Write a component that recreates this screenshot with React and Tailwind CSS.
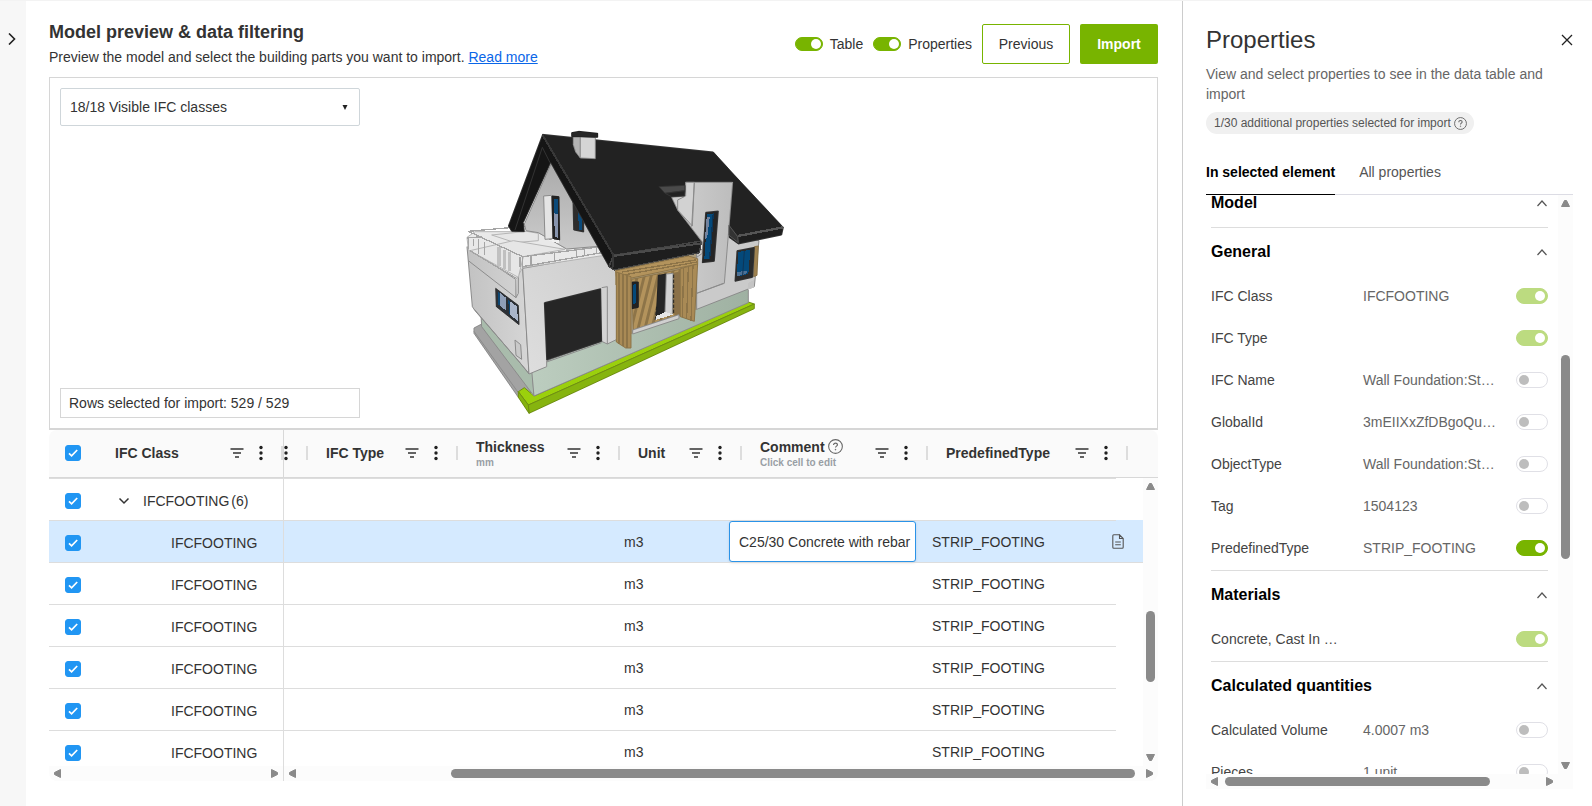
import clsx from "clsx";

const columns = [
  { label: "IFC Type", width: "w-[150px]" },
  { label: "Thickness", hint: "mm", width: "w-[162px]" },
  { label: "Unit", width: "w-[122px]" },
  { label: "Comment", hint: "Click cell to edit", help: true, width: "w-[186px]" },
  { label: "PredefinedType", width: "w-[200px]" },
];

const rows = [
  { id: 1, selected: true, comment: "C25/30 Concrete with rebar" },
  { id: 2, afterSelected: true },
  { id: 3 },
  { id: 4 },
  { id: 5 },
  { id: 6 },
];

const sections = [
  { title: "Model", items: [] },
  {
    title: "General",
    items: [
      { name: "IFC Class", value: "IFCFOOTING", on: true, locked: true },
      { name: "IFC Type", value: "", on: true, locked: true },
      { name: "IFC Name", value: "Wall Foundation:St…" },
      { name: "GlobalId", value: "3mEIIXxZfDBgoQu…" },
      { name: "ObjectType", value: "Wall Foundation:St…" },
      { name: "Tag", value: "1504123" },
      { name: "PredefinedType", value: "STRIP_FOOTING", on: true },
    ],
  },
  {
    title: "Materials",
    items: [{ name: "Concrete, Cast In …", value: "", on: true, locked: true }],
  },
  {
    title: "Calculated quantities",
    items: [
      { name: "Calculated Volume", value: "4.0007 m3" },
      { name: "Pieces", value: "1 unit" },
    ],
  },
];

function FilterIcon() {
  return (
    <svg className="h-3 w-[14px] shrink-0" viewBox="0 0 14 12" fill="none" stroke="#333" strokeWidth="1.6">
      <path d="M.5 2h13M3 6h8M5 10h4" />
    </svg>
  );
}

function DotsIcon() {
  return (
    <svg className="h-4 w-1 shrink-0" viewBox="0 0 4 16" fill="#222">
      <circle cx="2" cy="2.5" r="1.7" />
      <circle cx="2" cy="8" r="1.7" />
      <circle cx="2" cy="13.5" r="1.7" />
    </svg>
  );
}

function HelpIcon({ className }) {
  return (
    <svg className={clsx("shrink-0", className)} viewBox="0 0 14 14" fill="none" stroke="#666">
      <circle cx="7" cy="7" r="6.4" strokeWidth="1" />
      <path d="M5.2 5.6c0-1.1.8-1.8 1.8-1.8s1.8.7 1.8 1.6c0 1.2-1.8 1.3-1.8 2.6" strokeWidth="1.1" />
      <circle cx="7" cy="9.9" r=".5" fill="#666" strokeWidth=".4" />
    </svg>
  );
}

function DocumentIcon() {
  return (
    <svg className="h-[15px] w-3" viewBox="0 0 12 15" fill="none" stroke="#555" strokeWidth="1.1">
      <path d="M7.5.8H1.8Q.8.8.8 1.8v11.4q0 1 1 1h8.4q1 0 1-1V4.5L7.5.8v3.7h3.7M3.2 8h5.6M3.2 10.8h5.6" />
    </svg>
  );
}

function Chevron({ className, d }) {
  return (
    <svg className={clsx("shrink-0", className)} viewBox="0 0 12 12" fill="none" stroke="currentColor">
      <path d={d} />
    </svg>
  );
}

function Triangle({ points }) {
  return (
    <svg
      className="size-[9px] shrink-0"
      viewBox="0 0 9 9"
      fill="#8a8a8a"
      stroke="#8a8a8a"
      strokeLinejoin="round"
    >
      <polygon points={points} />
    </svg>
  );
}

function VerticalScrollbar({ before, thumb, after }) {
  return (
    <div className="flex w-[15px] shrink-0 flex-col items-center bg-[#fcfcfc] py-1">
      <Triangle points=".5,7.5 8.5,7.5 5.5,1.5 3.5,1.5" />
      <div style={{ flexGrow: before }} />
      <div className="w-[9px] rounded-full bg-[#8a8a8a]" style={{ flexGrow: thumb }} />
      <div style={{ flexGrow: after }} />
      <Triangle points=".5,1.5 8.5,1.5 5.5,7.5 3.5,7.5" />
    </div>
  );
}

function HorizontalScrollbar({ before, thumb, after, className }) {
  return (
    <div className={clsx("flex h-[15px] items-center bg-[#fcfcfc] pl-1", className)}>
      <Triangle points="7.5,.5 7.5,8.5 1.5,5.5 1.5,3.5" />
      <div style={{ flexGrow: before }} />
      <div className="h-[9px] rounded-full bg-[#8a8a8a]" style={{ flexGrow: thumb }} />
      <div style={{ flexGrow: after }} />
      <Triangle points="1.5,.5 1.5,8.5 7.5,5.5 7.5,3.5" />
    </div>
  );
}

function Switch({ small, locked, ...props }) {
  return (
    <input
      type="checkbox"
      role="switch"
      className={clsx(
        "relative shrink-0 appearance-none rounded-full border border-[#e0e0e6] bg-white",
        "before:absolute before:top-1/2 before:size-2.5 before:-translate-y-1/2 before:rounded-full before:bg-[#bdbdbd] checked:before:bg-white",
        small
          ? "h-3.5 w-7 before:left-px checked:before:left-[15px]"
          : "h-4 w-8 before:left-0.5 checked:before:left-[18px]",
        locked
          ? "checked:border-[#bcdb80] checked:bg-[#bcdb80]"
          : "checked:border-[#78b400] checked:bg-[#78b400]"
      )}
      {...props}
    />
  );
}

function Checkbox({ label }) {
  return (
    <span className="grid size-4">
      <input
        type="checkbox"
        defaultChecked
        aria-label={label}
        className="col-start-1 row-start-1 size-4 appearance-none rounded-[3px] border border-[#2196f3] bg-[#2196f3]"
      />
      <svg
        className="pointer-events-none col-start-1 row-start-1 size-4"
        viewBox="0 0 16 16"
        fill="none"
        stroke="#fff"
        strokeWidth="1.7"
      >
        <path d="M4 8.3l2.6 2.5L12.2 5" />
      </svg>
    </span>
  );
}

function HouseModel() {
  return (
    <svg
      className="absolute inset-0 size-full"
      viewBox="0 0 1107 350"
      role="img"
      aria-label="3D model of a house"
      shapeRendering="crispEdges"
    >
      <defs>
        <linearGradient id="front" x1="0" x2="1" y1="1" y2="0">
          <stop offset="0" stopColor="#dedede" />
          <stop offset="1" stopColor="#cdcdcd" />
        </linearGradient>
        <linearGradient id="side" x1="0" x2="1">
          <stop offset="0" stopColor="#c2c2c2" />
          <stop offset="1" stopColor="#d6d6d6" />
        </linearGradient>
        <linearGradient id="plinth" x1="0" x2="1">
          <stop offset="0" stopColor="#bccdbf" />
          <stop offset="1" stopColor="#9fb1a2" />
        </linearGradient>
        <linearGradient id="gable" x1="0" x2="0" y1="0" y2="1">
          <stop offset="0" stopColor="#aaa" />
          <stop offset="1" stopColor="#cbcbcb" />
        </linearGradient>
        <linearGradient id="tower" x1="0" x2="1">
          <stop offset="0" stopColor="#cfcfcf" />
          <stop offset="1" stopColor="#bdbdbd" />
        </linearGradient>
        <pattern id="slats" width="20" height="40" patternUnits="userSpaceOnUse" patternTransform="rotate(14)">
          <rect width="20" height="40" fill="#b3935c" />
          <rect width="8" height="40" fill="#8d7448" />
        </pattern>
      </defs>
      <g transform="translate(405 42) scale(.33333)" stroke="#8c8c8c" strokeWidth="3" strokeLinejoin="round">
        {/* footing and plinth */}
        <polygon points="57,624 80,612 232,815 190,832 57,640" fill="#a3a3a3" />
        <path d="M57,634 L190,818" fill="none" />
        <g stroke="#6f8f14">
          <polygon points="190,815 208,803 237,828 880,546 898,552 220,855" fill="#9bd00c" />
          <polygon points="220,855 898,552 898,566 222,880" fill="#86b40f" />
          <polygon points="190,815 220,855 222,880 190,832" fill="#86b40f" />
        </g>
        <polygon points="78,585 232,755 237,828 80,620" fill="#a9bcac" />
        <polygon points="230,750 237,828 880,548 880,500 490,600" fill="url(#plinth)" />

        {/* garage block */}
        <polygon points="36,380 182,478 203,440 222,762 190,722 60,572 52,560" fill="url(#side)" />
        <path d="M40,422 L183,533 L182,480 M58,568 L220,758" fill="none" />
        <polygon points="203,445 460,400 492,440 492,655 457,672 440,664 275,722 275,740 222,762" fill="url(#front)" />
        <path d="M440,503 L457,500 L457,672 M183,533 L190,520 L190,450" fill="none" />
        <polygon points="268,548 437,506 440,664 275,720" fill="#262626" stroke="#333" />
        <path d="M275,726 L440,668" fill="none" />
        <polygon points="180,660 197,674 200,718 183,706" fill="#c9c9c9" />
        <polygon points="122,505 190,556 192,614 124,560" fill="#2b3036" stroke="#333" />
        <polygon points="128,514 153,533 154,572 129,553" fill="#8f9fb8" stroke="none" />
        <polygon points="160,540 187,560 188,604 162,580" fill="#a9b5c9" stroke="none" />
        <polygon points="128,514 134,519 135,557 129,553" fill="#0d4672" stroke="none" />
        <polygon points="160,540 166,544 166,584 162,580" fill="#0d4672" stroke="none" />

        {/* terrace */}
        <polygon points="36,352 60,335 245,335 335,387 440,378 455,405 203,443 185,475 40,390" fill="#e9e9e9" stroke="#b5b5b5" />
        <polygon points="110,345 215,334 250,340 250,362 180,368" fill="#e6e6e6" stroke="#b5b5b5" />
        <polygon points="45,392 175,362 330,388 205,410 190,472" fill="#e6e6e6" stroke="#b5b5b5" />
        <g fill="none" stroke="#a5a5a5" strokeWidth="4">
          <path d="M40,334 L220,318 M40,334 L203,410 L440,380 M36,354 L80,350" />
          <path d="M203,440 L440,398 M203,410 V443 M228,407 V438 M298,398 V426 M365,389 V410 M388,387 V408 M425,382 V400" />
          <path d="M40,352 V388 M55,356 V378 M70,358 V402 M88,366 V404 M195,410 V440" />
          <path d="M45,392 L182,474 M182,478 V530" />
        </g>
        <path d="M132,382 V438 M148,390 V446 M164,396 V454" fill="none" stroke="#c0c0c0" strokeWidth="10" />

        {/* gable */}
        <polygon points="290,128 208,312 213,332 250,338 335,387 442,378" fill="url(#gable)" />
        <polygon points="266,228 290,226 294,356 270,358" fill="#e4e4e4" />
        <polygon points="291,228 312,230 314,360 294,356" fill="#222" stroke="#222" />
        <polygon points="298,236 308,236 309,300 298,300" fill="#0b4a7a" stroke="none" />
        <polygon points="298,280 309,284 310,354 299,350" fill="#8794ad" stroke="none" />
        <polygon points="294,358 314,362 312,370 280,362" fill="#efefef" stroke="none" />
        <polygon points="354,238 386,290 386,336 356,330" fill="#2c2c2c" stroke="#333" />
        <polygon points="370,270 382,290 382,332 371,328" fill="#0b4a7a" stroke="none" />

        {/* right wing and the wall behind the porch */}
        <polygon points="478,440 735,380 728,568 492,655" fill="#a99a7c" stroke="none" />
        <polygon points="725,400 800,340 912,362 898,500 725,568" fill="#cacaca" />
        <polygon points="880,510 898,500 898,480 880,488" fill="#c4c4c4" stroke="none" />
        <polygon points="898,380 910,378 906,466 896,470" fill="#9f8250" stroke="#8d7448" />
        <polygon points="846,392 898,382 893,472 840,484" fill="#2b2b2b" stroke="#333" />
        <polygon points="850,396 886,389 880,462 845,470" fill="#04497a" stroke="none" />
        <polygon points="846,456 876,452 874,462 845,469" fill="#4e7195" stroke="none" />
        <path d="M868,393 L863,466" stroke="#0d3557" fill="none" />

        {/* roof */}
        <polygon points="263,43 160,318 170,334 208,335 205,308 287,128 462,440 474,448 475,406" fill="#151515" stroke="#333" />
        <path d="M262,82 L180,330 M262,82 L285,128" fill="none" stroke="#333" />
        <polygon points="263,43 775,96 838,165 985,322 848,350 690,230 668,232 668,270 740,366 475,406" fill="#222" stroke="#333" />
        <polygon points="475,406 740,363 733,398 478,450 462,440" fill="#1e1e1e" stroke="#444" strokeWidth="4" />
        <path d="M475,408 L738,370" fill="none" stroke="#4b4b4b" strokeWidth="6" />
        <path d="M263,46 L475,405 L472,448" fill="none" stroke="#383838" strokeWidth="6" />
        <polygon points="822,316 848,350 985,322 980,345 850,372 822,352" fill="#1e1e1e" stroke="#333" />
        <path d="M848,348 L985,322" fill="none" stroke="#555" strokeWidth="7" />

        {/* stair tower */}
        <polygon points="650,232 692,228 692,187 833,187 808,490 725,520 725,412 742,400 742,366 668,270" fill="url(#tower)" />
        <polygon points="692,187 718,187 712,318 668,270 668,240 692,228" fill="#d2d2d2" />
        <path d="M718,187 L710,320 M725,520 L805,490" fill="none" />
        <polygon points="612,200 690,196 690,212 630,220" fill="#4a4a4a" stroke="#333" />
        <polygon points="630,220 690,212 688,228 650,230" fill="#222" stroke="#333" />
        <polygon points="752,277 790,273 778,424 742,428" fill="#252525" stroke="#333" />
        <polygon points="757,283 776,280 764,416 748,418" fill="#04497a" stroke="none" />
        <polygon points="755,290 764,292 757,350 750,358" fill="#71839f" stroke="none" />
        <path d="M775,280 L764,416" fill="none" stroke="#0d3557" strokeWidth="4" />
        <polygon points="822,316 848,350 850,368 822,346" fill="#333" stroke="#555" />

        {/* chimney */}
        <polygon points="355,50 376,50 376,114 362,96 355,74" fill="#b3b3b3" />
        <polygon points="376,50 421,52 421,116 376,114" fill="#d5d5d5" />
        <polygon points="350,38 372,34 428,40 428,52 376,50 350,50" fill="#262626" stroke="#222" />

        {/* entrance */}
        <g stroke="#8d7448">
          <polygon points="482,452 700,408 728,416 728,432 530,474 484,470" fill="#b3935c" />
          <path d="M500,456 L722,420 M510,464 L726,426" fill="none" strokeWidth="4" />
          <polygon points="530,478 685,446 690,580 535,630" fill="url(#slats)" />
          <polygon points="655,460 712,448 708,600 655,580" fill="#8a7048" />
          <polygon points="484,456 528,470 528,684 512,684 484,666" fill="#a98a55" />
          <path d="M492,460 V672 M504,462 V678 M516,466 V684" fill="none" strokeWidth="4" />
          <polygon points="676,446 728,432 718,604 676,590" fill="#a98a55" />
          <path d="M686,444 L682,592 M700,442 L695,596 M714,434 L708,604" fill="none" strokeWidth="4" />
        </g>
        <polygon points="532,486 550,486 550,562 532,566" fill="#222" stroke="#222" />
        <polygon points="535,494 543,492 543,550 535,552" fill="#04497a" stroke="none" />
        <polygon points="610,466 634,462 632,580 604,590" fill="#262626" stroke="#222" />
        <polygon points="634,462 654,460 652,584 630,580" fill="#d3d3d3" />
        <polygon points="600,600 604,588 632,576 655,584" fill="#e6e6e6" stroke="none" />
        <path d="M656,464 V584 M605,560 L600,604" fill="none" stroke="#222" strokeDasharray="10 5" />
        <polygon points="533,630 672,584 672,596 533,642" fill="#d0d0d0" />
      </g>
    </svg>
  );
}

function HeaderCell({ label, hint, help, className }) {
  return (
    <th scope="col" className={clsx("p-0 text-left", className)}>
      <div className="flex items-center pl-[18px]">
        <div className={clsx(hint && "pt-1")}>
          <div className="flex h-4 items-center gap-[3px] leading-4">
            {label}
            {help && <HelpIcon className="size-[15px]" />}
          </div>
          {hint && <div className="text-[10px] leading-4 text-[#999fa5]">{hint}</div>}
        </div>
        <button type="button" aria-label={`Filter ${label}`} className="ml-auto">
          <FilterIcon />
        </button>
        <button type="button" aria-label={`${label} menu`} className="mr-[18px] ml-[15px]">
          <DotsIcon />
        </button>
        <span className="h-3.5 w-0.5 bg-[#ddd]" />
      </div>
    </th>
  );
}

function DataTable() {
  const cell = "border-t border-[#ddd] p-0";

  return (
    <section className="flex min-h-0 flex-1 flex-col overflow-hidden rounded-lg text-sm text-[#333]">
      <table className="w-full table-fixed border-separate border-spacing-0 bg-[#fafafa]">
        <thead>
          <tr className="h-12 *:h-12 *:border-b *:border-[#d8d8d8] *:pb-0.5">
            <th className="w-12 p-0 pl-4">
              <Checkbox label="Select all rows" />
            </th>
            <HeaderCell label="IFC Class" className="w-[187px] border-r" />
            <th className="w-6 p-0">
              <div className="flex items-center justify-between">
                <DotsIcon />
                <span className="h-3.5 w-0.5 bg-[#ddd]" />
              </div>
            </th>
            {columns.map(({ width, ...column }) => (
              <HeaderCell key={column.label} {...column} className={width} />
            ))}
            <th className="p-0" />
          </tr>
        </thead>
      </table>

      <div className="flex min-h-0 flex-1">
        <div className="min-w-0 flex-1 overflow-hidden">
          <table className="w-full table-fixed border-separate border-spacing-0">
            <colgroup>
              <col className="w-12" />
              <col className="w-[187px]" />
              <col className="w-[162px]" />
              <col className="w-[163px]" />
              <col className="w-[120px]" />
              <col className="w-[187px]" />
              <col className="w-[200px]" />
              <col />
            </colgroup>
            <tbody>
              <tr className="h-[42px]">
                <td className={clsx(cell, "pt-0.5 pl-4")}>
                  <Checkbox label="Select IFCFOOTING group" />
                </td>
                <td className={clsx(cell, "border-r pt-0.5")}>
                  <button type="button" className="flex items-center pl-[21px]">
                    <Chevron className="mr-[13px] size-3 stroke-[1.5]" d="M1.5 3.5L6 8l4.5-4.5" />
                    IFCFOOTING
                    <span className="ml-0.5">(6)</span>
                  </button>
                </td>
                <td colSpan={5} className={cell} />
                <td className="p-0" />
              </tr>
              {rows.map((row) => (
                <tr key={row.id} className={clsx("h-[42px]", row.selected && "bg-[#d5eaff]")}>
                  <td className={clsx(cell, "pt-0.5 pl-4")}>
                    <Checkbox label={`Select row ${row.id}`} />
                  </td>
                  <td className={clsx(cell, "border-r pt-0.5 pl-[74px]")}>IFCFOOTING</td>
                  <td className={cell} />
                  <td className={cell} />
                  <td className={clsx(cell, "pl-[15px]")}>m3</td>
                  <td className={cell}>
                    {row.comment && (
                      <input
                        type="text"
                        aria-label="Comment"
                        defaultValue={row.comment}
                        className="block h-[41px] w-full rounded-[3px] border border-[#2a93e8] bg-white pl-[9px] shadow outline-none"
                      />
                    )}
                  </td>
                  <td className={clsx(cell, "pl-4")}>STRIP_FOOTING</td>
                  <td
                    className={clsx(
                      "p-0",
                      (row.selected || row.afterSelected) && "border-t",
                      row.selected && "border-transparent bg-clip-padding",
                      row.afterSelected && "border-[#ddd]"
                    )}
                  >
                    {row.selected && (
                      <button type="button" aria-label="Row details" className="-ml-1 block">
                        <DocumentIcon />
                      </button>
                    )}
                  </td>
                </tr>
              ))}
            </tbody>
          </table>
        </div>
        <VerticalScrollbar before={120} thumb={72} after={71} />
      </div>

      <div className="flex">
        <HorizontalScrollbar className="w-[235px] border-r border-[#ddd] pr-1" before={1} thumb={0} after={0} />
        <HorizontalScrollbar className="flex-1 pr-1" before={154} thumb={684} after={10} />
      </div>
    </section>
  );
}

function PropertySection({ title, items }) {
  return (
    <section className="border-b border-[#ddd]">
      <button type="button" className="flex h-12 w-full items-center justify-between">
        <h3 className="text-base font-bold text-black">{title}</h3>
        <Chevron className="size-3 stroke-[1.2] text-[#555]" d="M1.5 9L6 4l4.5 5" />
      </button>
      {items.map((item) => {
        const id = item.name.toLowerCase().replace(/\W+/g, "-");
        return (
          <div key={id} className="flex h-[42px] items-center pb-0.5 text-sm">
            <label htmlFor={id} className="w-[132px] whitespace-nowrap text-[#444]">
              {item.name}
            </label>
            <span className="ml-5 flex-1 whitespace-nowrap text-[#666]">{item.value}</span>
            <Switch id={id} defaultChecked={item.on} locked={item.locked} disabled={item.locked} />
          </div>
        );
      })}
    </section>
  );
}

function PropertiesPanel() {
  return (
    <aside className="flex w-[410px] shrink-0 flex-col border-l border-[#ccc] pt-[23px] pr-[19px] pb-[17px] pl-[23px]">
      <div className="flex items-center justify-between">
        <h2 className="text-2xl leading-8 text-[#333]">Properties</h2>
        <button type="button" aria-label="Close" className="text-[#222]">
          <Chevron className="size-3 stroke-[1.3]" d="M1 1l10 10M11 1L1 11" />
        </button>
      </div>
      <p className="mt-2 text-sm leading-5 text-[#666]">
        View and select properties to see in the data table and import
      </p>
      <div className="mt-2 flex h-[22px] items-center gap-[3px] self-start rounded-full bg-[#f0f0f0] pr-[7px] pl-2 text-xs text-[#555]">
        1/30 additional properties selected for import
        <HelpIcon className="size-[13px]" />
      </div>

      <div role="tablist" className="mt-7 flex gap-6 border-b border-[#dcdce4] text-sm leading-5">
        <button
          type="button"
          role="tab"
          aria-selected="true"
          className="-mb-px border-b border-black pb-3 font-bold text-black"
        >
          In selected element
        </button>
        <button type="button" role="tab" aria-selected="false" className="pb-3 text-[#555]">
          All properties
        </button>
      </div>

      <div className="flex min-h-0 flex-1">
        <div className="min-w-0 flex-1 overflow-hidden pr-2.5 pl-[5px]">
          <div className="-mt-4">
            {sections.map((section) => (
              <PropertySection key={section.title} {...section} />
            ))}
          </div>
        </div>
        <VerticalScrollbar before={147} thumb={205} after={202} />
      </div>
      <HorizontalScrollbar className="pr-[19px]" before={6} thumb={267} after={55} />
    </aside>
  );
}

export default function App() {
  return (
    <div className="flex h-screen border-t border-[#f3f3f3] bg-white font-['Liberation_Sans',Arial,sans-serif] text-[#333]">
      <nav className="w-[26px] shrink-0 bg-[#f7f7f7] pt-8">
        <button type="button" aria-label="Expand sidebar" className="ml-1.5 block text-[#222]">
          <Chevron className="size-3 stroke-[1.6]" d="M3 .5L8.500 6 3 11.500" />
        </button>
      </nav>

      <main className="flex min-w-0 flex-1 flex-col pt-[17px] pr-6 pb-[25px] pl-[23px]">
        <header className="flex items-start justify-between pb-[9px]">
          <div>
            <h1 className="text-lg leading-7 font-bold">Model preview &amp; data filtering</h1>
            <p className="text-sm leading-[22px]">
              Preview the model and select the building parts you want to import.{" "}
              <a href="#read-more" className="text-[#0a66e8] underline">
                Read more
              </a>
            </p>
          </div>
          <div className="mt-1.5 flex items-center gap-2.5 text-sm">
            <label className="flex items-center gap-[7px]">
              <Switch small defaultChecked />
              Table
            </label>
            <label className="flex items-center gap-[7px]">
              <Switch small defaultChecked />
              Properties
            </label>
            <button type="button" className="h-10 w-[88px] rounded-[2px] border border-[#78b400]">
              Previous
            </button>
            <button type="button" className="h-10 w-[78px] rounded-[2px] bg-[#78b400] font-bold text-white">
              Import
            </button>
          </div>
        </header>

        <section className="relative h-[353px] shrink-0 border border-b-2 border-[#d6d6d6]">
          <HouseModel />
          <div className="relative flex h-full w-80 flex-col justify-between p-2.5 text-sm">
            <div className="grid">
              <select
                aria-label="Visible IFC classes"
                className="col-start-1 row-start-1 h-[38px] appearance-none rounded-[2px] border border-[#cfd6da] bg-white pl-[9px]"
              >
                <option>18/18 Visible IFC classes</option>
              </select>
              <svg
                className="pointer-events-none col-start-1 row-start-1 mr-3 h-[5px] w-1.5 self-center justify-self-end"
                viewBox="0 0 6 5"
                fill="#222"
              >
                <path d="M.5 0h5L3 5z" />
              </svg>
            </div>
            <div className="flex h-[30px] items-center border border-[#d6d6d6] bg-white pl-2">
              Rows selected for import: 529 / 529
            </div>
          </div>
        </section>

        <DataTable />
      </main>

      <PropertiesPanel />
    </div>
  );
}
